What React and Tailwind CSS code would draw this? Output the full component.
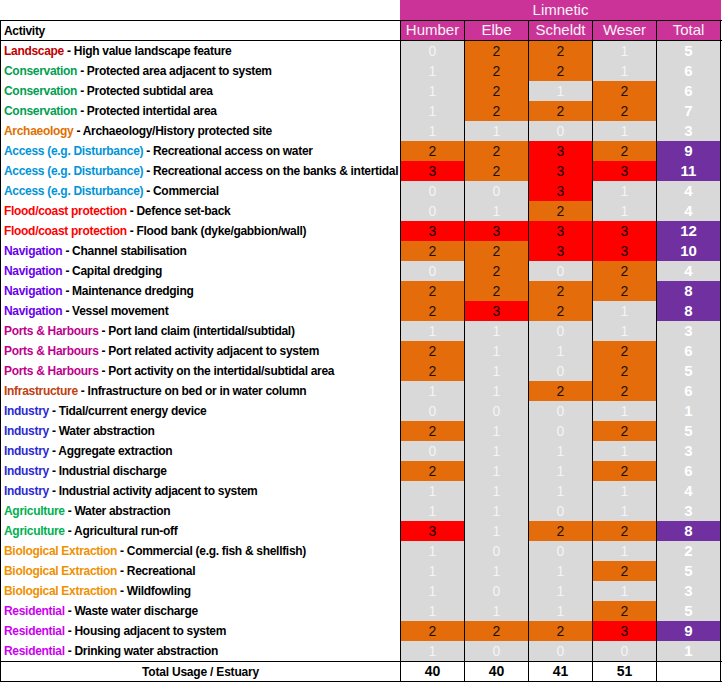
import React from 'react'

const CAT = {
  landscape: { name: 'Landscape', color: 'text-[#C00000]' },
  conservation: { name: 'Conservation', color: 'text-[#00A050]' },
  archaeology: { name: 'Archaeology', color: 'text-[#E07000]' },
  access: { name: 'Access (e.g. Disturbance)', color: 'text-[#0094D8]' },
  flood: { name: 'Flood/coast protection', color: 'text-[#FF0000]' },
  navigation: { name: 'Navigation', color: 'text-[#6A00F0]' },
  ports: { name: 'Ports & Harbours', color: 'text-[#C0008C]' },
  infra: { name: 'Infrastructure', color: 'text-[#C04010]' },
  industry: { name: 'Industry', color: 'text-[#2C2CD0]' },
  agriculture: { name: 'Agriculture', color: 'text-[#00B050]' },
  bio: { name: 'Biological Extraction', color: 'text-[#F09000]' },
  residential: { name: 'Residential', color: 'text-[#CC00F0]' },
}

const rows = [
  ['landscape', 'High value landscape feature', [0, 2, 2, 1]],
  ['conservation', 'Protected area adjacent to system', [1, 2, 2, 1]],
  ['conservation', 'Protected subtidal area', [1, 2, 1, 2]],
  ['conservation', 'Protected intertidal area', [1, 2, 2, 2]],
  ['archaeology', 'Archaeology/History protected site', [1, 1, 0, 1]],
  ['access', 'Recreational access on water', [2, 2, 3, 2]],
  ['access', 'Recreational access on the banks & intertidal', [3, 2, 3, 3]],
  ['access', 'Commercial', [0, 0, 3, 1]],
  ['flood', 'Defence set-back', [0, 1, 2, 1]],
  ['flood', 'Flood bank (dyke/gabbion/wall)', [3, 3, 3, 3]],
  ['navigation', 'Channel stabilisation', [2, 2, 3, 3]],
  ['navigation', 'Capital dredging', [0, 2, 0, 2]],
  ['navigation', 'Maintenance dredging', [2, 2, 2, 2]],
  ['navigation', 'Vessel movement', [2, 3, 2, 1]],
  ['ports', 'Port land claim (intertidal/subtidal)', [1, 1, 0, 1]],
  ['ports', 'Port related activity adjacent to system', [2, 1, 1, 2]],
  ['ports', 'Port activity on the intertidal/subtidal area', [2, 1, 0, 2]],
  ['infra', 'Infrastructure on bed or in water column', [1, 1, 2, 2]],
  ['industry', 'Tidal/current energy device', [0, 0, 0, 1]],
  ['industry', 'Water abstraction', [2, 1, 0, 2]],
  ['industry', 'Aggregate extraction', [0, 1, 1, 1]],
  ['industry', 'Industrial discharge', [2, 1, 1, 2]],
  ['industry', 'Industrial activity adjacent to system', [1, 1, 1, 1]],
  ['agriculture', 'Water abstraction', [1, 1, 0, 1]],
  ['agriculture', 'Agricultural run-off', [3, 1, 2, 2]],
  ['bio', 'Commercial (e.g. fish & shellfish)', [1, 0, 0, 1]],
  ['bio', 'Recreational', [1, 1, 1, 2]],
  ['bio', 'Wildfowling', [1, 0, 1, 1]],
  ['residential', 'Waste water discharge', [1, 1, 1, 2]],
  ['residential', 'Housing adjacent to system', [2, 2, 2, 3]],
  ['residential', 'Drinking water abstraction', [1, 0, 0, 0]],
]

const estuaries = ['Humber', 'Elbe', 'Scheldt', 'Weser']

const scoreClass = (v) => {
  if (v === 3) return 'bg-[#FF0000] text-[#1a0000]'
  if (v === 2) return 'bg-[#E46C0A] text-[#1a1000]'
  return 'bg-[#D9D9D9] text-[#F4F4F4]'
}

export default function App() {
  const totals = estuaries.map((_, i) => rows.reduce((s, r) => s + r[2][i], 0))

  return (
    <div className="w-[722px] h-[682px] bg-white" style={{ fontFamily: '"Liberation Sans", Arial, sans-serif' }}>
      {/* Limnetic band */}
      <div className="flex h-[20px]">
        <div className="w-[400px]" />
        <div className="w-[321px] bg-[#CC3399] text-[#F4F4F4] text-[15px] flex items-center justify-center">
          Limnetic
        </div>
      </div>

      {/* Column headers */}
      <div className="flex h-[21px] border-y border-black">
        <div className="w-[400px] border-l border-black pl-[3px] flex items-center text-[12px] font-bold text-black tracking-[-0.3px]">
          Activity
        </div>
        {estuaries.map((e) => (
          <div key={e} className="w-[64px] border-l border-black bg-[#CC3399] text-[#F4F4F4] text-[15px] flex items-center justify-center">
            {e}
          </div>
        ))}
        <div className="w-[65px] border-x border-black bg-[#CC3399] text-[#F4F4F4] text-[15px] flex items-center justify-center">
          Total
        </div>
      </div>

      {/* Activity rows */}
      {rows.map(([cat, desc, vals], idx) => {
        const total = vals.reduce((a, b) => a + b, 0)
        return (
          <div key={idx} className="flex h-[20px]">
            <div className="w-[400px] border-l border-black pl-[3px] flex items-center text-[12px] font-bold whitespace-nowrap tracking-[-0.3px]">
              <span className={CAT[cat].color}>{CAT[cat].name}</span>
              <span className="text-black">&nbsp;- {desc}</span>
            </div>
            {vals.map((v, i) => (
              <div key={i} className={`w-[64px] border-l border-black text-[14px] flex items-center justify-center ${scoreClass(v)}`}>
                {v}
              </div>
            ))}
            <div className={`w-[65px] border-x border-black text-[15px] font-bold text-white flex items-center justify-center ${total >= 8 ? 'bg-[#7030A0]' : 'bg-[#D9D9D9]'}`}>
              {total}
            </div>
          </div>
        )
      })}

      {/* Totals row */}
      <div className="flex h-[21px] border-y border-black">
        <div className="w-[400px] border-l border-black flex items-center justify-center text-[12px] font-bold text-black tracking-[-0.2px]">
          Total Usage / Estuary
        </div>
        {totals.map((t, i) => (
          <div key={i} className="w-[64px] border-l border-black flex items-center justify-center text-[14px] font-bold text-black">
            {t}
          </div>
        ))}
        <div className="w-[65px] border-x border-black" />
      </div>
    </div>
  )
}
